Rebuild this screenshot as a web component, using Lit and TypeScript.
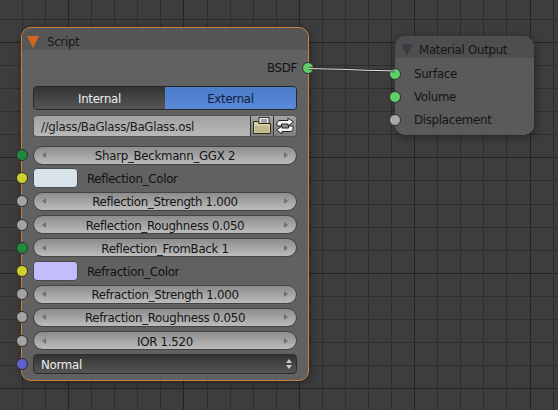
import { LitElement, html, css, svg } from "lit";
import { customElement } from "lit/decorators.js";

const GREEN = "#1f8a3c";
const YEL = "#cfd030";
const GREY = "#a3a3a3";

type Row =
  | { k: "num"; label: string; sock: string }
  | { k: "color"; label: string; sock: string; color: string };

const rows: Row[] = [
  { k: "num", label: "Sharp_Beckmann_GGX 2", sock: GREEN },
  { k: "color", label: "Reflection_Color", sock: YEL, color: "#d8e4ea" },
  { k: "num", label: "Reflection_Strength 1.000", sock: GREY },
  { k: "num", label: "Reflection_Roughness 0.050", sock: GREY },
  { k: "num", label: "Reflection_FromBack 1", sock: GREEN },
  { k: "color", label: "Refraction_Color", sock: YEL, color: "#c4bdfd" },
  { k: "num", label: "Refraction_Strength 1.000", sock: GREY },
  { k: "num", label: "Refraction_Roughness 0.050", sock: GREY },
  { k: "num", label: "IOR 1.520", sock: GREY },
];

@customElement("app-root")
export class AppRoot extends LitElement {
  static styles = css`
    :host {
      display: block;
      width: 558px;
      height: 410px;
      font-family: "DejaVu Sans", sans-serif;
      font-size: 11.8px;
      letter-spacing: -0.3px;
      color: #111;
    }
    .canvas {
      position: relative;
      width: 558px;
      height: 410px;
      overflow: hidden;
      background-color: #3d3d3d;
    }
    .grid,
    .wire {
      position: absolute;
      inset: 0;
    }
    .node {
      position: absolute;
      box-sizing: border-box;
      border-radius: 10px;
      box-shadow: 1px 2px 10px rgba(0, 0, 0, 0.4);
    }
    .script {
      left: 21px;
      top: 27px;
      width: 288px;
      height: 354px;
      border: 1.5px solid #c9813a;
      background: rgba(99, 99, 99, 0.95);
    }
    .output {
      left: 395px;
      top: 36px;
      width: 139px;
      height: 99px;
      background: rgba(92, 92, 92, 0.95);
    }
    .head {
      display: flex;
      align-items: center;
      height: 22px;
      box-sizing: border-box;
      padding: 6px 0 0 5px;
      gap: 8px;
      border-radius: 9px 9px 0 0;
      color: #161616;
      background: rgba(64, 64, 72, 0.45);
    }
    .script .head {
      background: rgba(78, 78, 78, 0.6);
    }
    .output .head {
      padding-left: 6px;
      gap: 6px;
    }
    .tri {
      width: 0;
      height: 0;
      border-left: 6px solid transparent;
      border-right: 6px solid transparent;
      border-top: 12px solid #d2661f;
    }
    .output .tri {
      border-top-color: #3c3c40;
    }
    .body {
      display: flex;
      flex-direction: column;
      padding: 6px 11px 0 11px;
    }
    .out-row {
      position: relative;
      display: flex;
      justify-content: flex-end;
      align-items: center;
      height: 24px;
      margin-bottom: 6px;
    }
    .toggle {
      display: flex;
      height: 24px;
      border-radius: 4px;
      border: 1px solid #262626;
      box-sizing: border-box;
      overflow: hidden;
      margin-bottom: 5px;
    }
    .toggle div {
      flex: 1;
      display: flex;
      align-items: center;
      justify-content: center;
      padding-top: 2px;
      box-sizing: border-box;
    }
    .t-off {
      background: linear-gradient(#333333, #555555);
      color: #eee;
      border-right: 1px solid #222;
      margin-right: -1px;
    }
    .t-on {
      background: linear-gradient(#4a7cc8, #5a8ada);
      color: #101c3a;
    }
    .path {
      display: flex;
      height: 22px;
      box-sizing: border-box;
      border: 1px solid #555;
      border-radius: 4px;
      overflow: hidden;
      margin-bottom: 6.5px;
    }
    .path .txt {
      flex: 1;
      display: flex;
      align-items: center;
      padding: 2px 0 0 7px;
      background: linear-gradient(#a2a2a2, #b8b8b8);
      color: #1a1a1a;
    }
    .ib {
      width: 22px;
      display: flex;
      align-items: center;
      justify-content: center;
      border-left: 1px solid #333;
      background: linear-gradient(#a4a4a4, #7e7e7e);
    }
    .row {
      position: relative;
      height: 23.2px;
      display: flex;
      align-items: center;
    }
    .num {
      flex: 1;
      height: 19px;
      box-sizing: border-box;
      border: 1px solid #434343;
      border-radius: 10px;
      background: linear-gradient(#8c8c8c, #bcbcbc);
      display: flex;
      align-items: center;
      justify-content: space-between;
      padding: 2px 8px 0;
      color: #141414;
    }
    .arrow-l,
    .arrow-r {
      width: 0;
      height: 0;
      margin-top: -2px;
      border-top: 3.5px solid transparent;
      border-bottom: 3.5px solid transparent;
    }
    .arrow-l {
      border-right: 4px solid #707070;
    }
    .arrow-r {
      border-left: 4px solid #707070;
    }
    .swatch {
      width: 45px;
      height: 20px;
      border-radius: 4px;
      border: 1px solid #4a4a4a;
      box-sizing: border-box;
      margin-right: 9px;
    }
    .color-label {
      padding-top: 2px;
    }
    .select {
      flex: 1;
      height: 20px;
      box-sizing: border-box;
      border: 1px solid #2c2c2c;
      border-radius: 4px;
      background: linear-gradient(#333, #555);
      color: #eee;
      display: flex;
      align-items: center;
      justify-content: space-between;
      padding: 2px 4px 0 7px;
    }
    .updown {
      display: flex;
      flex-direction: column;
      gap: 2px;
      margin-top: -2px;
    }
    .up,
    .down {
      width: 0;
      height: 0;
      border-left: 3px solid transparent;
      border-right: 3px solid transparent;
    }
    .up {
      border-bottom: 4px solid #ccc;
    }
    .down {
      border-top: 4px solid #ccc;
    }
    .sock {
      position: absolute;
      box-sizing: border-box;
      width: 12px;
      height: 12px;
      border-radius: 50%;
      border: 1px solid #2e2e2e;
      left: -17px;
      top: 50%;
      transform: translateY(-50%);
    }
    .out-row .sock {
      left: auto;
      right: -17px;
      background: #5fd069;
    }
    .o-body {
      display: flex;
      flex-direction: column;
      padding-top: 4px;
    }
    .o-row {
      position: relative;
      height: 23px;
      display: flex;
      align-items: center;
      padding-left: 19px;
      color: #141414;
    }
    .o-row .sock {
      left: -6px;
    }
  `;

  private gridLines() {
    const out = [];
    const step = 23.07;
    for (let i = 0; i < 25; i++) {
      const x = Math.round(22 + i * step);
      const major = (i + 3) % 5 === 0;
      out.push(svg`<line x1=${x + 0.5} x2=${x + 0.5} y1="0" y2="410" stroke=${major ? "#242424" : "#2e2e2e"} />`);
    }
    for (let i = 0; i < 18; i++) {
      const y = Math.round(19 + i * step);
      const major = (i + 4) % 5 === 0;
      out.push(svg`<line y1=${y + 0.5} y2=${y + 0.5} x1="0" x2="558" stroke=${major ? "#242424" : "#2e2e2e"} />`);
    }
    return out;
  }

  render() {
    return html`<div class="canvas">
      <svg class="grid" width="558" height="410">${this.gridLines()}</svg>

      <div class="node script">
        <div class="head"><span class="tri"></span><span>Script</span></div>
        <div class="body">
          <div class="out-row">BSDF<span class="sock"></span></div>
          <div class="toggle">
            <div class="t-off">Internal</div>
            <div class="t-on">External</div>
          </div>
          <div class="path">
            <div class="txt">//glass/BaGlass/BaGlass.osl</div>
            <div class="ib">
              <svg width="20" height="18" viewBox="0 0 20 18">
                <rect x="7" y="0.500" width="10" height="8" fill="#f2f2f2" stroke="#333" />
                <path d="M9 3h6M9 5h6" stroke="#555" />
                <path d="M1.500 4.500h4l1.500 2h11.500v10H1.500z" fill="#d8cfa2" stroke="#2e2a1c" />
                <rect x="3" y="9" width="14" height="6.500" fill="#c2b88c" />
              </svg>
            </div>
            <div class="ib">
              <svg width="20" height="18" viewBox="0 0 20 18" fill="none">
                <path d="M2 9V6.500C2 4.500 3.500 3.500 5 3.500H13V1L18.500 5L13 9V7H6.500V9Z" fill="#f4f4f4" stroke="#222" />
                <path d="M18 9V11.500C18 13.500 16.500 14.500 15 14.500H7V17L1.500 13L7 9V11H13.500V9Z" fill="#f4f4f4" stroke="#222" />
              </svg>
            </div>
          </div>
          ${rows.map((r) =>
            r.k === "num"
              ? html`<div class="row">
                  <span class="sock" style="background:${r.sock}"></span>
                  <div class="num">
                    <span class="arrow-l"></span><span>${r.label}</span><span class="arrow-r"></span>
                  </div>
                </div>`
              : html`<div class="row">
                  <span class="sock" style="background:${r.sock}"></span>
                  <div class="swatch" style="background:${r.color}"></div>
                  <span class="color-label">${r.label}</span>
                </div>`
          )}
          <div class="row">
            <span class="sock" style="background:#5f5fd0"></span>
            <div class="select">
              <span>Normal</span>
              <span class="updown"><span class="up"></span><span class="down"></span></span>
            </div>
          </div>
        </div>
      </div>

      <div class="node output">
        <div class="head"><span class="tri"></span><span>Material Output</span></div>
        <div class="o-body">
          <div class="o-row"><span class="sock" style="background:#5fd069"></span>Surface</div>
          <div class="o-row"><span class="sock" style="background:#5fd069"></span>Volume</div>
          <div class="o-row"><span class="sock" style="background:#a8a8a8"></span>Displacement</div>
        </div>
      </div>

      <svg class="wire" width="558" height="410">
        <path d="M309 68.500C340 69 365 70.500 395 71" fill="none" stroke="#222" stroke-width="2.500" />
        <path d="M309 68.500C340 69 365 70.500 395 71" fill="none" stroke="#e8e8e8" stroke-width="1.200" />
      </svg>
    </div>`;
  }
}
